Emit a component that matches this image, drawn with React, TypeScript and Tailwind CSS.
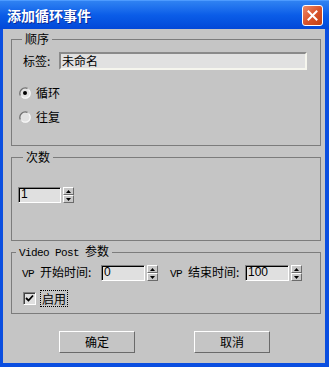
import React from "react";

const Mono = ({ children }: { children: React.ReactNode }) => (
  <span className="font-['Liberation_Mono',monospace] text-[11px] tracking-[-0.6px]">{children}</span>
);

const SpinArrow = ({ up }: { up?: boolean }) => (
  <div className="flex h-[8px] w-[11px] items-center justify-center border border-t-white border-l-white border-r-[#6b6b6b] border-b-[#6b6b6b] bg-[#c8c8c8]">
    <svg width="5" height="3" viewBox="0 0 5 3">
      {up ? <polygon points="2.5,0 5,3 0,3" fill="#000" /> : <polygon points="0,0 5,0 2.5,3" fill="#000" />}
    </svg>
  </div>
);

const Spinner = ({ value, width }: { value: string; width: string }) => (
  <div className="flex items-center">
    <div
      className={`${width} h-[16px] border border-t-[#808080] border-l-[#808080] border-r-white border-b-white bg-[#e0e0e0] pl-[2px] leading-[13px] shadow-[inset_1px_1px_0_#000] font-['Liberation_Sans',sans-serif] text-[12px]`}
    >
      {value}
    </div>
    <div className="ml-[2px] flex flex-col">
      <SpinArrow up />
      <SpinArrow />
    </div>
  </div>
);

const Radio = ({ checked, label }: { checked?: boolean; label: string }) => (
  <div className="flex h-[16px] items-center">
    <svg width="12" height="12" viewBox="0 0 12 12">
      <circle cx="6" cy="6" r="5.5" fill="#e2e2e2" />
      <path d="M1.3 8.5 A5.5 5.5 0 0 1 8.5 1.3" stroke="#6e6e6e" strokeWidth="1.3" fill="none" />
      <path d="M3 9.8 A4.5 4.5 0 0 0 9.8 3" stroke="#f8f8f8" strokeWidth="1.2" fill="none" />
      {checked && <circle cx="6" cy="6" r="2" fill="#000" />}
    </svg>
    <span className="ml-[5px]">{label}</span>
  </div>
);

const Group = ({ legend, indent, children }: { legend: React.ReactNode; indent: string; children: React.ReactNode }) => (
  <fieldset className="ml-[8px] w-[310px] border border-[#7c7c7c]">
    <legend className={`${indent} px-[3px] leading-[14px]`}>{legend}</legend>
    {children}
  </fieldset>
);

const Button = ({ label, className }: { label: string; className?: string }) => (
  <div
    className={`flex h-[22px] w-[76px] items-center justify-center border border-t-white border-l-white border-r-[#6a6a6a] border-b-[#6a6a6a] bg-[#c5c5c5] ${className ?? ""}`}
  >
    {label}
  </div>
);

export default function App() {
  return (
    <div className="h-[367px] w-[329px] font-['Noto_Sans_CJK_SC',sans-serif] text-[12px] leading-[14px] text-black">
      <div className="flex h-full w-full flex-col overflow-hidden bg-[#0a4ee0]">
        {/* title bar */}
        <div className="flex h-[29px] shrink-0 items-center border-t border-t-[#4d9bff] bg-gradient-to-b from-[#2f82f2] via-[#0b5de8] to-[#0348d8] pl-[7px] pr-[6px]">
          <span className="text-[14px] font-bold leading-[16px] text-white [text-shadow:1px_1px_0_#0a2a9a]">
            添加循环事件
          </span>
          <div className="ml-auto flex h-[21px] w-[21px] items-center justify-center rounded-[3px] border border-white bg-gradient-to-br from-[#ec8a68] via-[#d9542c] to-[#c2400f]">
            <svg width="11" height="11" viewBox="0 0 11 11">
              <path d="M1.5 1.5 L9.5 9.5 M9.5 1.5 L1.5 9.5" stroke="#fff" strokeWidth="2" strokeLinecap="square" />
            </svg>
          </div>
        </div>

        {/* body */}
        <div className="ml-[3px] mr-[4px] mb-[4px] flex flex-1 flex-col bg-[#c5c5c5] pt-[3px]">
          <Group legend="顺序" indent="ml-[10px]">
            <div className="pt-[6px] pl-[7px] pb-[20px]">
              <div className="ml-[4px] flex h-[18px] items-center">
                <span className="w-[36px]">标签:</span>
                <div className="h-[18px] w-[248px] border-2 border-t-[#8a8a8a] border-l-[#8a8a8a] border-r-[#f6f6ee] border-b-[#f6f6ee] bg-[#e1e1e1] pl-[1px] leading-[14px]">
                  未命名
                </div>
              </div>
              <div className="mt-[15px] flex flex-col gap-[8px]">
                <Radio checked label="循环" />
                <Radio label="往复" />
              </div>
            </div>
          </Group>

          <div className="mt-[4px]">
            <Group legend="次数" indent="ml-[11px]">
              <div className="pt-[23px] pl-[6px] pb-[37px]">
                <Spinner value="1" width="w-[43px]" />
              </div>
            </Group>
          </div>

          <div className="mt-[3px]">
            <Group
              legend={
                <>
                  <Mono>Video Post </Mono>参数
                </>
              }
              indent="ml-[4px]"
            >
              <div className="pt-[5px] pl-[10px] pb-[6px]">
                <div className="flex h-[16px] items-center">
                  <span className="w-[79px]">
                    <Mono>VP </Mono>开始时间:
                  </span>
                  <Spinner value="0" width="w-[44px]" />
                  <span className="ml-[12px] w-[75px]">
                    <Mono>VP </Mono>结束时间:
                  </span>
                  <Spinner value="100" width="w-[44px]" />
                </div>
                <div className="mt-[9px] ml-[1px] flex h-[17px] items-center">
                  <div className="flex h-[13px] w-[13px] items-center justify-center border border-t-[#808080] border-l-[#808080] border-r-white border-b-white bg-[#e0e0e0] shadow-[inset_1px_1px_0_#404040]">
                    <svg width="9" height="9" viewBox="0 0 9 9">
                      <path d="M1 4 L3.5 6.5 L8 1.5" stroke="#000" strokeWidth="1.8" fill="none" />
                    </svg>
                  </div>
                  <span className="ml-[4px] border border-dotted border-black px-[1px] leading-[15px]">启用</span>
                </div>
              </div>
            </Group>
          </div>

          <div className="mt-[17px] flex">
            <Button label="确定" className="ml-[56px]" />
            <Button label="取消" className="ml-[59px]" />
          </div>
        </div>
      </div>
    </div>
  );
}
